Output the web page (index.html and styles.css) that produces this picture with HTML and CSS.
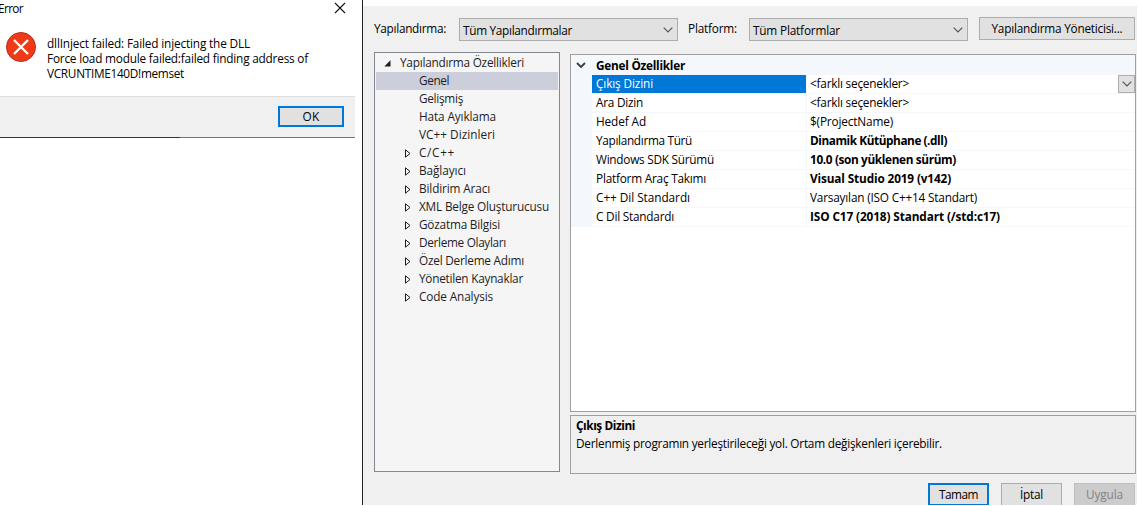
FILE: index.html
```html
<!DOCTYPE html>
<html lang="tr">
<head>
<meta charset="utf-8">
<title>Yapılandırma Özellikleri</title>
<link rel="stylesheet" href="styles.css">
</head>
<body>
<div class="screen">
  <section class="error-dialog">
    <header class="error-title"><span class="t" data-w="25">Error</span>
      <svg class="close" width="12" height="12" viewBox="0 0 12 12"><path d="M1 1L11 11M11 1L1 11" fill="none" stroke="#111" stroke-width="1.1"/></svg>
    </header>
    <div class="error-body">
      <svg width="30" height="30" viewBox="0 0 30 30"><circle cx="15" cy="15" r="14.5" fill="#f03a17" stroke="#b52d1b"/><path d="M8 8L22 22M22 8L8 22" fill="none" stroke="#fff" stroke-width="2.3"/></svg>
      <div class="error-text">
        <div><span class="t" data-w="203">dllInject failed: Failed injecting the DLL</span></div>
        <div><span class="t" data-w="261">Force load module failed:failed finding address of</span></div>
        <div><span class="t" data-w="137">VCRUNTIME140D!memset</span></div>
      </div>
    </div>
    <footer class="error-footer"><button class="btn primary ok"><span class="t" data-w="17">OK</span></button></footer>
  </section>

  <section class="props">
    <div class="toolbar">
      <label class="lab1"><span class="t" data-w="72">Yapılandırma:</span></label>
      <div class="combo"><span class="t" data-w="109">Tüm Yapılandırmalar</span><svg width="10" height="6" viewBox="0 0 10 6"><path d="M.7 .7L5 5L9.3 .7" fill="none" stroke="#555" stroke-width="1.2"/></svg></div>
      <label class="lab2"><span class="t" data-w="49">Platform:</span></label>
      <div class="combo"><span class="t" data-w="87">Tüm Platformlar</span><svg width="10" height="6" viewBox="0 0 10 6"><path d="M.7 .7L5 5L9.3 .7" fill="none" stroke="#555" stroke-width="1.2"/></svg></div>
      <button class="btn manager"><span class="t" data-w="131">Yapılandırma Yöneticisi...</span></button>
    </div>
    <div class="main">
      <div class="tree">
        <div class="node root"><svg width="7" height="7" viewBox="0 0 7 7"><path d="M6.5 .3V6.5H.3Z" fill="#1e1e1e"/></svg><span class="t" data-w="124">Yapılandırma Özellikleri</span></div>
        <div class="node selected"><span class="t" data-w="30">Genel</span></div>
        <div class="node"><span class="t" data-w="44">Gelişmiş</span></div>
        <div class="node"><span class="t" data-w="77">Hata Ayıklama</span></div>
        <div class="node"><span class="t" data-w="76">VC++ Dizinleri</span></div>
        <div class="node parent"><span class="t" data-w="36">C/C++</span></div>
        <div class="node parent"><span class="t" data-w="47">Bağlayıcı</span></div>
        <div class="node parent"><span class="t" data-w="71">Bildirim Aracı</span></div>
        <div class="node parent"><span class="t" data-w="130">XML Belge Oluşturucusu</span></div>
        <div class="node parent"><span class="t" data-w="81">Gözatma Bilgisi</span></div>
        <div class="node parent"><span class="t" data-w="87">Derleme Olayları</span></div>
        <div class="node parent"><span class="t" data-w="105">Özel Derleme Adımı</span></div>
        <div class="node parent"><span class="t" data-w="104">Yönetilen Kaynaklar</span></div>
        <div class="node parent"><span class="t" data-w="74">Code Analysis</span></div>
      </div>
      <div class="detail">
        <div class="grid">
          <div class="category"><svg width="10" height="7" viewBox="0 0 10 7"><path d="M1 1L5 5L9 1" fill="none" stroke="#3c3c3c" stroke-width="1.8"/></svg><span class="t" data-w="89">Genel Özellikler</span></div>
          <div class="row active"><div class="name"><span class="t" data-w="57">Çıkış Dizini</span></div><div class="value"><span class="t" data-w="99">&lt;farklı seçenekler&gt;</span><span class="drop"><svg width="10" height="6" viewBox="0 0 10 6"><path d="M.7 .7L5 5L9.3 .7" fill="none" stroke="#555" stroke-width="1.2"/></svg></span></div></div>
          <div class="row"><div class="name"><span class="t" data-w="47">Ara Dizin</span></div><div class="value"><span class="t" data-w="99">&lt;farklı seçenekler&gt;</span></div></div>
          <div class="row"><div class="name"><span class="t" data-w="50">Hedef Ad</span></div><div class="value"><span class="t" data-w="83">$(ProjectName)</span></div></div>
          <div class="row"><div class="name"><span class="t" data-w="96">Yapılandırma Türü</span></div><div class="value set"><span class="t" data-w="137">Dinamik Kütüphane (.dll)</span></div></div>
          <div class="row"><div class="name"><span class="t" data-w="118">Windows SDK Sürümü</span></div><div class="value set"><span class="t" data-w="146">10.0 (son yüklenen sürüm)</span></div></div>
          <div class="row"><div class="name"><span class="t" data-w="110">Platform Araç Takımı</span></div><div class="value set"><span class="t" data-w="141">Visual Studio 2019 (v142)</span></div></div>
          <div class="row"><div class="name"><span class="t" data-w="94">C++ Dil Standardı</span></div><div class="value"><span class="t" data-w="167">Varsayılan (ISO C++14 Standart)</span></div></div>
          <div class="row"><div class="name"><span class="t" data-w="78">C Dil Standardı</span></div><div class="value set"><span class="t" data-w="190">ISO C17 (2018) Standart (/std:c17)</span></div></div>
        </div>
        <div class="help">
          <div class="help-title"><span class="t" data-w="59">Çıkış Dizini</span></div>
          <div><span class="t" data-w="366">Derlenmiş programın yerleştirileceği yol. Ortam değişkenleri içerebilir.</span></div>
        </div>
      </div>
    </div>
    <div class="actions">
      <button class="btn primary"><span class="t" data-w="39">Tamam</span></button>
      <button class="btn"><span class="t" data-w="23">İptal</span></button>
      <button class="btn" disabled><span class="t" data-w="37">Uygula</span></button>
    </div>
  </section>
</div>
<script src="fit.js"></script>
</body>
</html>
```
FILE: styles.css
```css
* { box-sizing: border-box; }
body {
  margin: 0;
  background: #fff;
  color: #000;
  font: 11.8px/18px "Open Sans", "Noto Sans", sans-serif;
  overflow: hidden;
}
svg { display: block; flex: none; }
.t { white-space: nowrap; display: inline-block; flex: none; }
.screen { display: flex; width: 1137px; height: 505px; overflow: hidden; }

.error-dialog { width: 355px; height: 138px; flex: none; display: flex; flex-direction: column; border-bottom: 1px solid; border-image: linear-gradient(90deg, #333 180px, #777 180px) 1; }
.error-title { height: 32px; display: flex; justify-content: space-between; align-items: flex-start; padding: 2px 9px 0 0; line-height: 13px; }
.error-title .t { margin-left: -2px; }
.error-body { height: 64px; display: flex; gap: 11px; padding-left: 6px; }
.error-text { padding-top: 4px; line-height: 15px; }
.error-text div { height: 15px; }
.error-footer { height: 41px; display: flex; justify-content: flex-end; padding: 9px 11px 0 0; background: #f0f0f0; border-top: 1px solid #dfdfdf; }

.btn {
  display: flex; align-items: center; justify-content: center;
  height: 23px; width: 61px; padding: 0 0 1px;
  font: inherit; line-height: 16px; color: #000;
  background: #e1e1e1; border: 1px solid #adadad; border-radius: 0;
}
.btn.primary { border: 2px solid #0078d7; }
.btn:disabled { background: #ccc; border-color: #bfbfbf; color: #838383; }
.btn.ok { width: 66px; height: 21px; }
.btn.manager { width: 156px; margin: -1px 0 0 11px; }

.props { margin: 0 0 0 7px; width: 775px; border-left: 1px solid #222; background: linear-gradient(#fff 6px, #f0f0f0 6px); }
.toolbar { display: flex; height: 52px; padding: 18px 0 0 11px; }
.toolbar label { line-height: 21px; }
.lab1 { width: 85px; }
.lab2 { width: 61px; margin-left: 10px; }
.combo { width: 219px; height: 23px; display: flex; align-items: center; justify-content: space-between; padding: 0 4px 0 3px; background: #e1e1e1; border: 1px solid #adadad; }

.main { display: flex; gap: 10px; padding-left: 11px; height: 422px; }
.tree { width: 186px; height: 420px; padding: 1px; background: #f5f5f5; border: 1px solid #828790; color: #1e1e1e; }
.node { height: 18px; padding-left: 43px; display: flex; align-items: center; }
.node .t { line-height: 16px; padding-bottom: 2px; }
.node.root { padding-left: 8px; gap: 9px; }
.node.selected { background: #cccedb; }
.node.parent { padding-left: 29px; gap: 8px; }

.detail { width: 566px; padding-top: 2px; display: flex; flex-direction: column; gap: 3px; }
.grid { height: 358px; background: #fff; border: 1px solid #a0a0a0; }
.category { height: 20px; display: flex; align-items: center; gap: 10px; padding-left: 5px; background: #f4f7fc; font-weight: 700; }
.row { height: 19px; display: flex; border-left: 21px solid #f4f7fc; line-height: 17px; }
.name { width: 214px; height: 19px; padding-left: 4px; border-bottom: 1px solid #f4f7fc; }
.value { flex: 1; height: 19px; padding-left: 3px; display: flex; justify-content: space-between; border-left: 1px solid #f4f7fc; border-bottom: 1px solid #f4f7fc; }
.value.set { font-weight: 700; }
.active .name { background: #0078d7; background-clip: padding-box; color: #fff; }
.drop { width: 17px; height: 18px; display: flex; align-items: center; justify-content: center; border: 1px solid #adadad; background: #e1e1e1; }
.help { height: 59px; padding: 1px 5px; border: 1px solid #a0a0a0; line-height: 17px; }
.help-title { font-weight: 700; }
.help div { height: 18px; }
.actions { display: flex; justify-content: flex-end; gap: 12px; padding: 9px 2px 0 0; }
```
FILE: fit.js
```js
// Outline arrows for collapsed tree nodes.
document.querySelectorAll('.node.parent').forEach(function (node) {
  node.insertAdjacentHTML('afterbegin',
    '<svg width="6" height="9" viewBox="0 0 6 9"><path d="M.5 .8V8.2L5 4.5Z" fill="none" stroke="#1e1e1e"/></svg>');
});

// Track each label to its designed width.
document.querySelectorAll('.t').forEach(function (el) {
  var gap = Number(el.dataset.w) - el.getBoundingClientRect().width;
  el.style.letterSpacing = (gap / el.textContent.length).toFixed(3) + 'px';
});
```
